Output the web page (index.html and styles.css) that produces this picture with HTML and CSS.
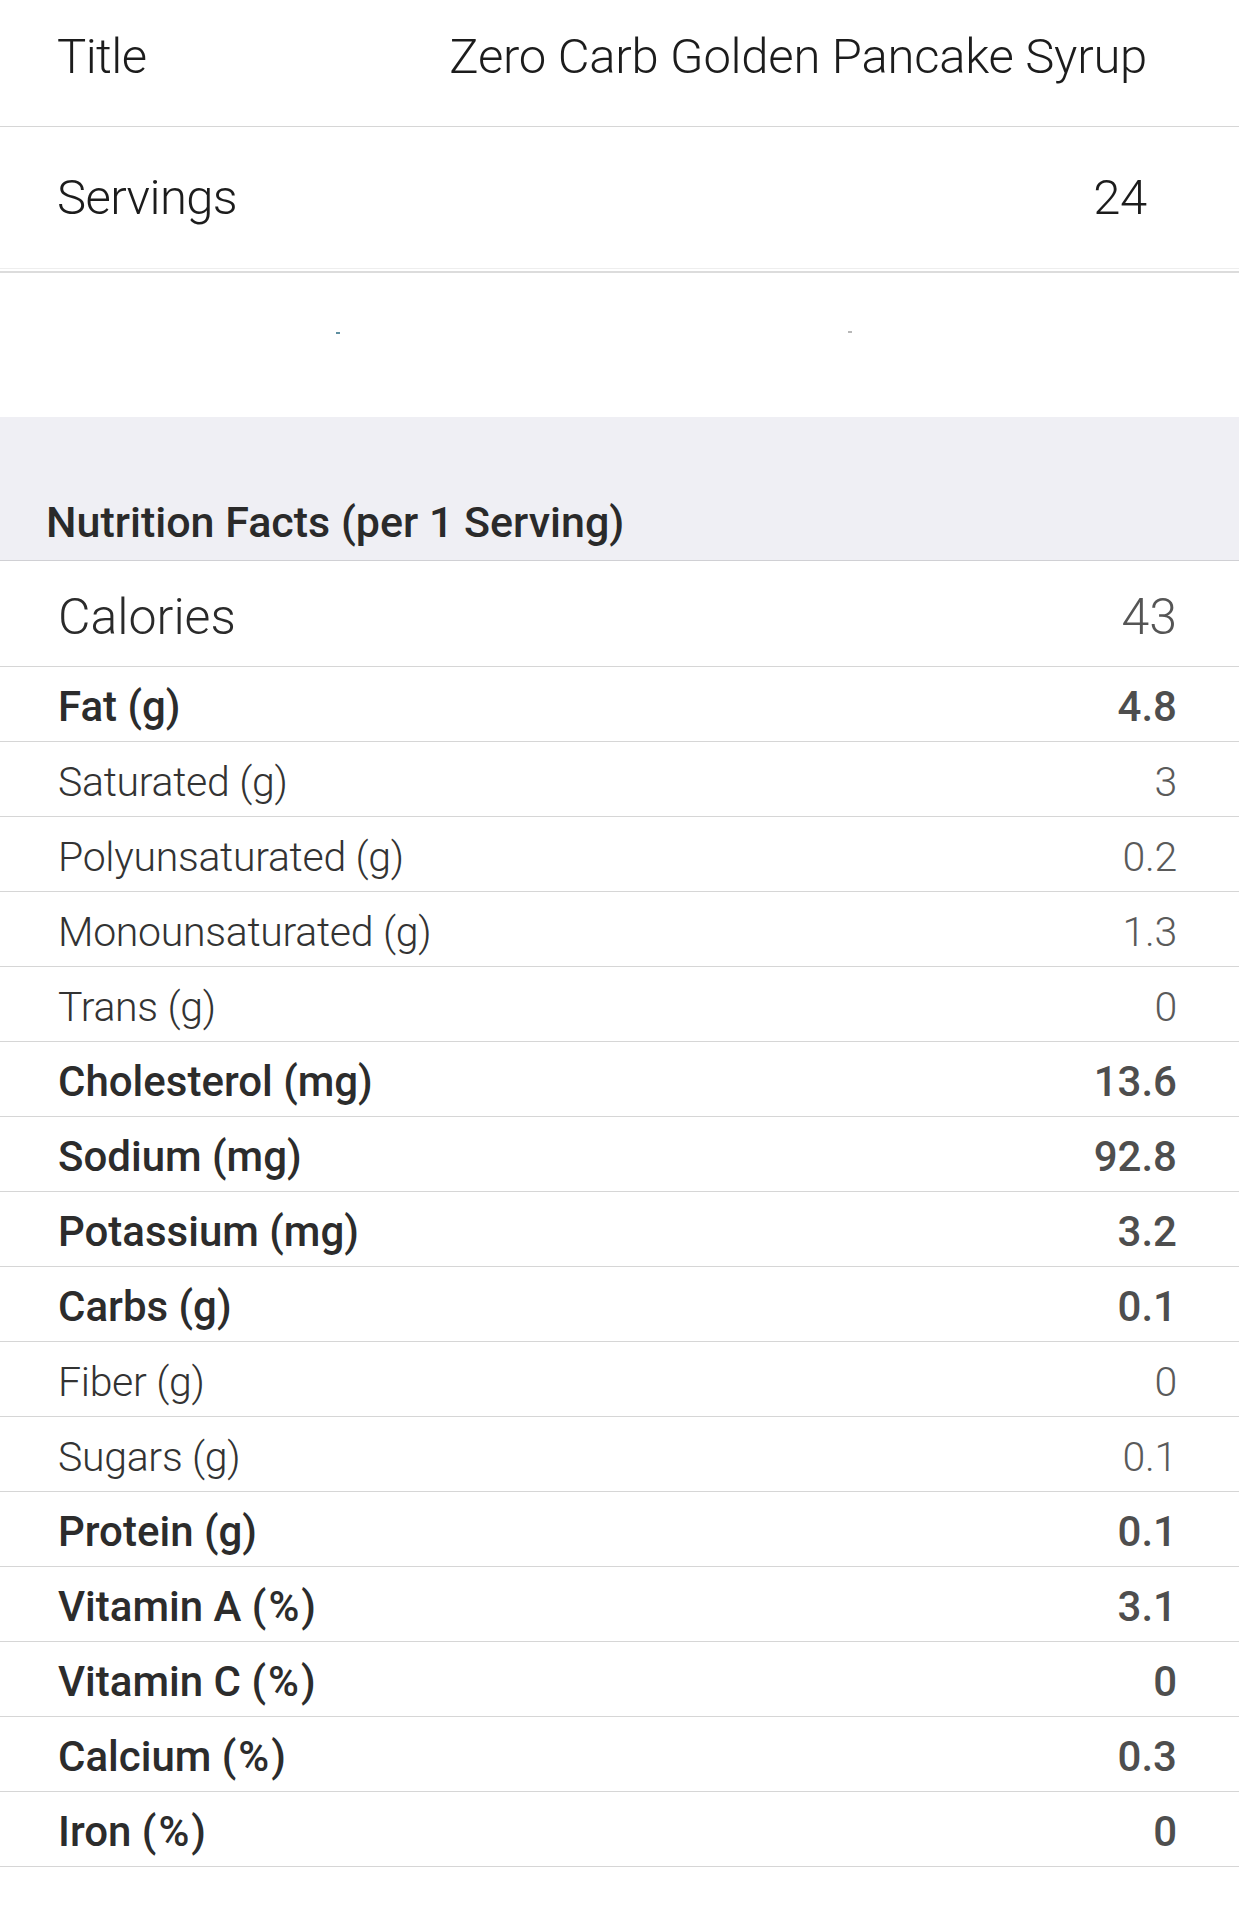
FILE: index.html
```html
<!DOCTYPE html>
<html lang="en">
<head>
<meta charset="utf-8">
<title>Zero Carb Golden Pancake Syrup</title>
<link rel="stylesheet" href="styles.css">
</head>
<body>
<div class="page">
  <div class="info-row info-title">
    <span class="info-label">Title</span>
    <span class="info-value">Zero Carb Golden Pancake Syrup</span>
  </div>
  <div class="info-row info-servings">
    <span class="info-label">Servings</span>
    <span class="info-value">24</span>
  </div>
  <div class="double-sep"></div>
  <div class="blank">
    <span class="speck speck-a"></span>
    <span class="speck speck-b"></span>
  </div>
  <div class="section-head">
    <span class="section-title">Nutrition Facts (per 1 Serving)</span>
  </div>
  <div class="n-row n-calories"><span class="n-label">Calories</span><span class="n-value">43</span></div>
  <div class="n-row bold"><span class="n-label">Fat (g)</span><span class="n-value">4.8</span></div>
  <div class="n-row"><span class="n-label">Saturated (g)</span><span class="n-value">3</span></div>
  <div class="n-row"><span class="n-label">Polyunsaturated (g)</span><span class="n-value">0.2</span></div>
  <div class="n-row"><span class="n-label">Monounsaturated (g)</span><span class="n-value">1.3</span></div>
  <div class="n-row"><span class="n-label">Trans (g)</span><span class="n-value">0</span></div>
  <div class="n-row bold"><span class="n-label">Cholesterol (mg)</span><span class="n-value">13.6</span></div>
  <div class="n-row bold"><span class="n-label">Sodium (mg)</span><span class="n-value">92.8</span></div>
  <div class="n-row bold"><span class="n-label">Potassium (mg)</span><span class="n-value">3.2</span></div>
  <div class="n-row bold"><span class="n-label">Carbs (g)</span><span class="n-value">0.1</span></div>
  <div class="n-row"><span class="n-label">Fiber (g)</span><span class="n-value">0</span></div>
  <div class="n-row"><span class="n-label">Sugars (g)</span><span class="n-value">0.1</span></div>
  <div class="n-row bold"><span class="n-label">Protein (g)</span><span class="n-value">0.1</span></div>
  <div class="n-row bold"><span class="n-label">Vitamin A <span class="pct">(%)</span></span><span class="n-value">3.1</span></div>
  <div class="n-row bold"><span class="n-label">Vitamin C <span class="pct">(%)</span></span><span class="n-value">0</span></div>
  <div class="n-row bold"><span class="n-label">Calcium <span class="pct">(%)</span></span><span class="n-value">0.3</span></div>
  <div class="n-row bold"><span class="n-label">Iron <span class="pct">(%)</span></span><span class="n-value">0</span></div>
</div>
</body>
</html>
```
FILE: styles.css
```css
html, body {
  margin: 0;
  padding: 0;
  background: #ffffff;
}

.page {
  width: 1239px;
  font-family: Roboto, "Liberation Sans", sans-serif;
  color: #1c1c1c;
}

.info-row {
  display: flex;
  justify-content: space-between;
  align-items: center;
  padding: 0 92px 0 57px;
  font-size: 49px;
  font-weight: 300;
  letter-spacing: -0.6px;
  box-sizing: border-box;
}

.info-value {
  letter-spacing: -0.25px;
}

.info-title {
  height: 127px;
  padding-bottom: 13px;
  border-bottom: 1px solid #d6d6d6;
}

.info-servings {
  height: 142px;
  border-bottom: 1px solid #eeeeee;
}

.double-sep {
  margin-top: 2px;
  border-top: 2px solid #dcdcdc;
}

.blank {
  height: 144px;
  display: flex;
  align-items: flex-start;
  padding-top: 59px;
  box-sizing: border-box;
}

.speck {
  display: block;
  height: 2px;
  width: 4px;
}

.speck-a {
  margin-left: 336px;
  background: #5f8fa0;
}

.speck-b {
  margin-left: 508px;
  margin-top: -1px;
  background: #b8b8b8;
}

.section-head {
  height: 144px;
  background: #efeff4;
  border-bottom: 1px solid #d0d0d4;
  box-sizing: border-box;
  display: flex;
  align-items: flex-end;
  padding: 0 0 13px 46px;
}

.section-title {
  font-size: 43px;
  font-weight: 500;
  color: #2a2a2a;
}

.n-row {
  display: flex;
  justify-content: space-between;
  align-items: center;
  height: 75px;
  box-sizing: border-box;
  border-bottom: 1px solid #d6d6d6;
  padding: 5px 62px 0 58px;
  font-size: 41px;
  font-weight: 300;
  letter-spacing: -0.3px;
}

.n-label {
  color: #333333;
}

.n-value {
  color: #5a5a5a;
}

.n-row.bold {
  font-size: 42px;
  letter-spacing: 0;
}

.n-row.bold .n-label {
  font-weight: 500;
  color: #2c2c2c;
}

.n-row.bold .n-value {
  font-weight: 500;
  color: #4e4e4e;
}

.pct {
  letter-spacing: 2px;
}

.n-calories {
  height: 106px;
  padding-top: 7px;
  font-size: 50px;
  letter-spacing: 0;
}

.n-calories .n-label {
  color: #2a2a2a;
}

.n-calories .n-value {
  color: #555555;
}
```
